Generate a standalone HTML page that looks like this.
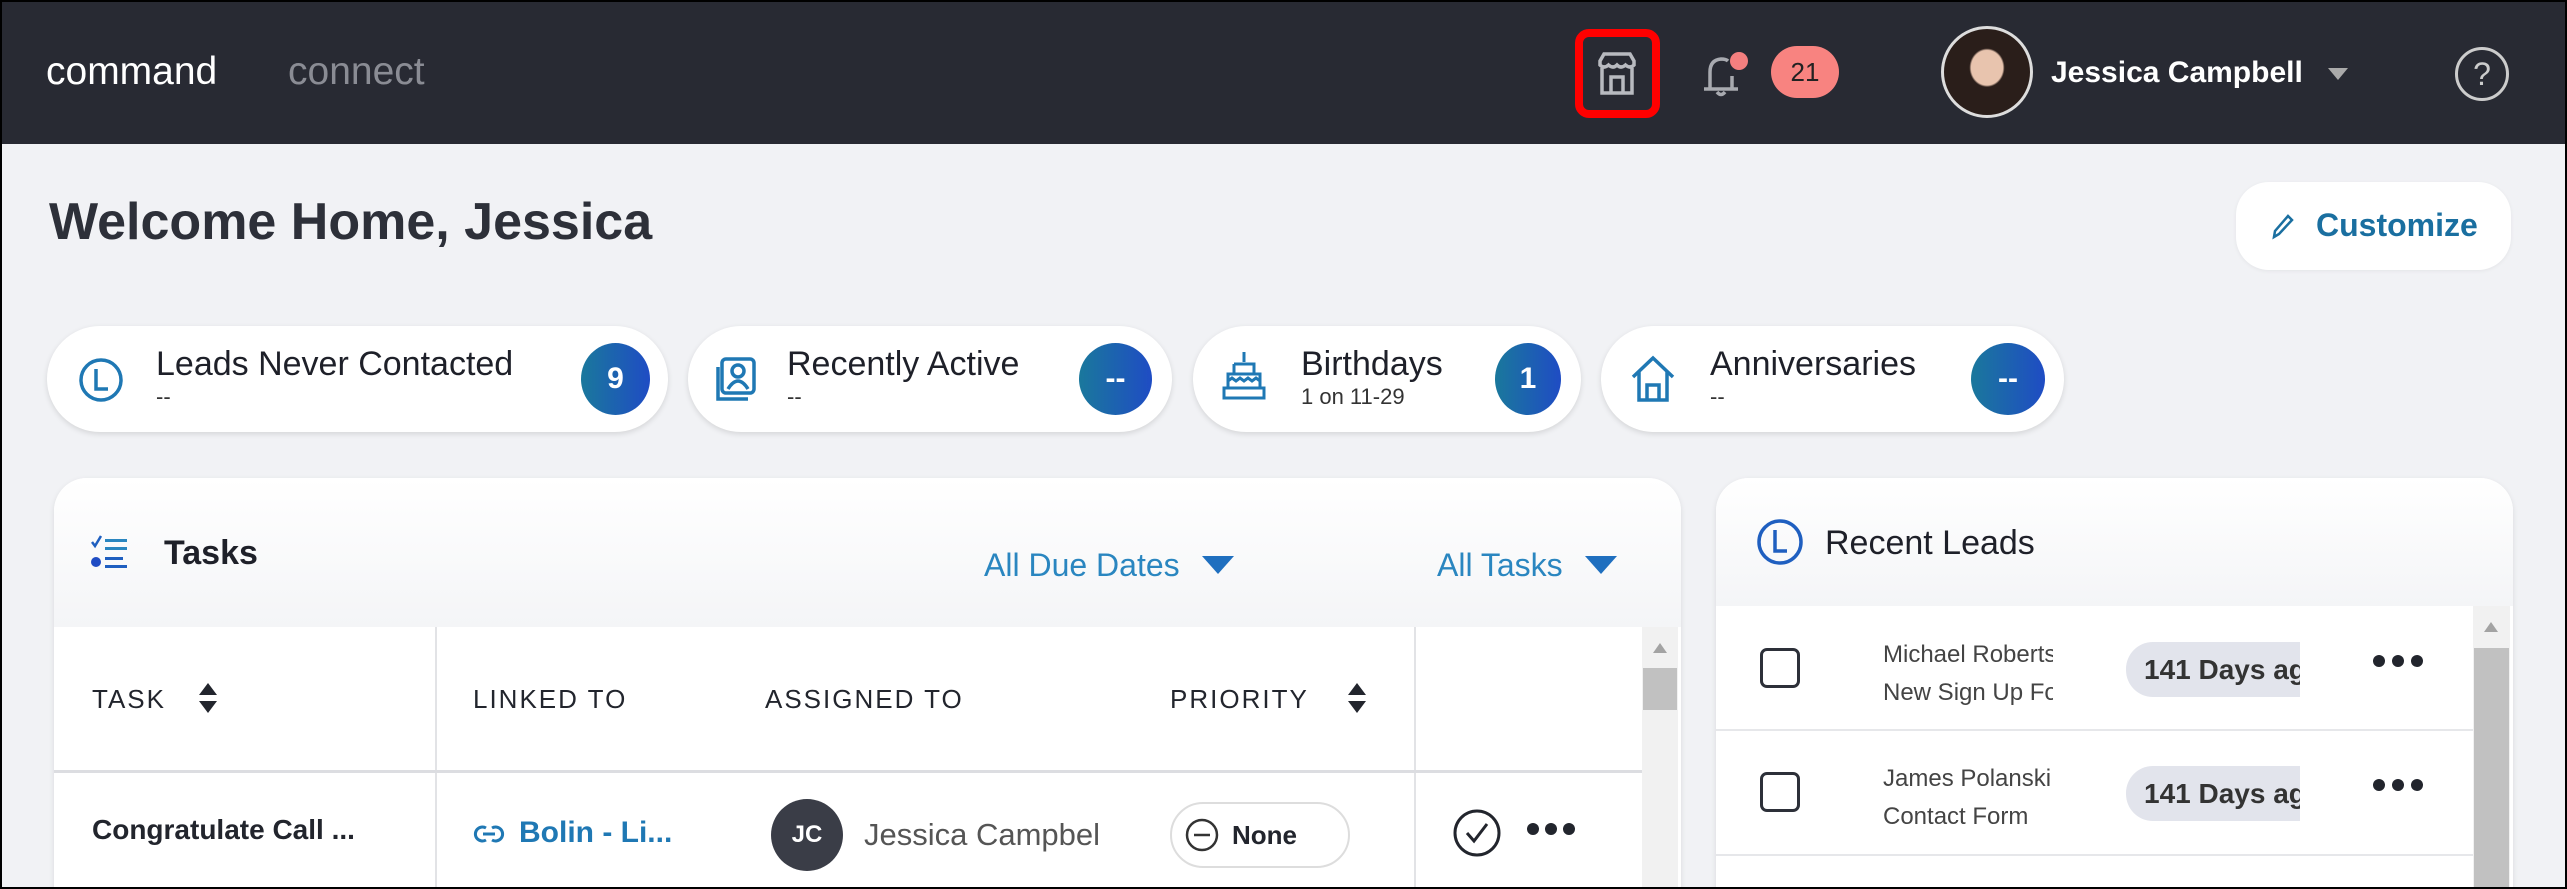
<!DOCTYPE html>
<html><head><meta charset="utf-8"><style>
*{box-sizing:border-box;margin:0;padding:0}
html,body{width:2567px;height:889px;overflow:hidden}
body{background:#f1f2f5;font-family:"Liberation Sans",sans-serif;position:relative}
#w{position:absolute;left:0;top:0;width:2567px;height:889px;overflow:hidden}
.frame{left:0;top:0;width:2567px;height:889px;border:2px solid #000;z-index:10;pointer-events:none}
.a{position:absolute}
.nav{left:0;top:0;width:2567px;height:144px;background:#282a33}
.pill{background:#fff;border-radius:53px;height:106px;top:326px;box-shadow:0 2px 6px rgba(0,0,0,.12)}
.pt{font-size:34px;color:#1e2029;font-weight:500;white-space:nowrap}
.ps{font-size:22px;color:#333;white-space:nowrap}
.badge{border-radius:50%;background:linear-gradient(90deg,#1a789c,#1f4cc4);color:#fff;font-weight:bold;font-size:30px;display:flex;align-items:center;justify-content:center;height:72px;top:343px}
.card{background:#fff;border-radius:33px 33px 0 0;box-shadow:0 2px 6px rgba(0,0,0,.1);overflow:hidden}
.th{font-size:26px;letter-spacing:2px;color:#22252d;font-weight:500;top:684px}
.blue{color:#2a86c0}
</style></head><body><div id="w">
<div class="a nav"></div>
<div class="a" style="left:46px;top:50px;font-size:39px;color:#fff">command</div>
<div class="a" style="left:288px;top:50px;font-size:39px;color:#8a8c94">connect</div>
<div class="a" style="left:1575px;top:29px;width:85px;height:89px;border:8px solid #f00;border-radius:14px"></div>
<svg class="a" style="left:1592px;top:49px" width="50" height="50" viewBox="0 0 50 50" fill="none" stroke="#b8bac0" stroke-width="3.5"><path d="M8 12 L12 5 H38 L42 12 V16 Q38 20 33.5 16 Q29 20 25 16 Q21 20 16.5 16 Q12 20 8 16 Z"/><path d="M10 19 V44 H40 V19"/><path d="M19 44 V28 H31 V44"/></svg>
<svg class="a" style="left:1696px;top:50px" width="50" height="50" viewBox="0 0 50 50" fill="none" stroke="#a8aab0" stroke-width="3.5"><path d="M14 38 V22 Q14 10 25 9 Q30 9 32 11"/><path d="M36 26 V38 M8 39 H42 M21 42 Q25 47 29 42"/></svg>
<div class="a" style="left:1730px;top:52px;width:18px;height:18px;border-radius:50%;background:#f47f7f"></div>
<div class="a" style="left:1771px;top:46px;width:68px;height:52px;border-radius:26px;background:#f88380;color:#222;font-size:26px;display:flex;align-items:center;justify-content:center">21</div>
<div class="a" style="left:1941px;top:26px;width:92px;height:92px;border-radius:50%;background:radial-gradient(ellipse at 50% 45%,#e8c4ae 0 26%,#2a1e1a 29%);border:3px solid #ddd"></div>
<div class="a" style="left:2051px;top:56px;font-size:30px;color:#fff;font-weight:bold">Jessica Campbell</div>
<div class="a" style="left:2328px;top:68px;width:0;height:0;border-left:10px solid transparent;border-right:10px solid transparent;border-top:12px solid #aaa"></div>
<div class="a" style="left:2455px;top:47px;width:54px;height:54px;border-radius:50%;border:3px solid #ccc;color:#ccc;font-size:32px;text-align:center;line-height:48px">?</div>

<div class="a" style="left:49px;top:192px;font-size:52px;font-weight:bold;color:#2d3039">Welcome Home, Jessica</div>
<div class="a" style="left:2236px;top:182px;width:275px;height:88px;border-radius:33px;background:#fff;box-shadow:0 1px 4px rgba(0,0,0,.06)"></div>
<svg class="a" style="left:2270px;top:212px" width="26" height="28" viewBox="0 0 26 28" fill="none" stroke="#1a6fa0" stroke-width="2.5"><path d="M4 25 L5 19 L18 4 L22 8 L9 22 Z"/></svg>
<div class="a" style="left:2316px;top:207px;font-size:32px;font-weight:bold;color:#1a6fa0">Customize</div>

<div class="a pill" style="left:47px;width:621px"></div>
<svg class="a" style="left:78px;top:357px" width="46" height="46" viewBox="0 0 46 46" fill="none" stroke="#1f78b4" stroke-width="3.5"><circle cx="23" cy="23" r="20"/><path d="M18 12 V32 H30"/></svg>
<div class="a pt" style="left:156px;top:345px">Leads Never Contacted</div>
<div class="a ps" style="left:156px;top:384px">--</div>
<div class="a badge" style="left:581px;width:69px">9</div>

<div class="a pill" style="left:688px;width:484px"></div>
<svg class="a" style="left:714px;top:355px" width="46" height="50" viewBox="0 0 46 50" fill="none" stroke="#1f78b4" stroke-width="3.5"><rect x="8" y="4" width="32" height="34" rx="4"/><path d="M4 12 V44 H34"/><circle cx="24" cy="16" r="6"/><path d="M14 34 Q24 18 34 34"/></svg>
<div class="a pt" style="left:787px;top:345px">Recently Active</div>
<div class="a ps" style="left:787px;top:384px">--</div>
<div class="a badge" style="left:1079px;width:73px">--</div>

<div class="a pill" style="left:1193px;width:388px"></div>
<svg class="a" style="left:1222px;top:350px" width="44" height="54" viewBox="0 0 44 54" fill="none" stroke="#1f78b4" stroke-width="3"><path d="M22 2 V12 M12 14 H32 V24 M12 14 V24 M6 24 H38 V38 H6 Z M6 31 L10 28 L14 31 L18 28 L22 31 L26 28 L30 31 L34 28 L38 31 M2 38 H42 V48 H2 Z"/></svg>
<div class="a pt" style="left:1301px;top:345px">Birthdays</div>
<div class="a ps" style="left:1301px;top:384px">1 on 11-29</div>
<div class="a badge" style="left:1495px;width:66px">1</div>

<div class="a pill" style="left:1601px;width:463px"></div>
<svg class="a" style="left:1630px;top:355px" width="46" height="48" viewBox="0 0 46 48" fill="none" stroke="#1f78b4" stroke-width="3.5"><path d="M3 22 L23 3 L43 22 M9 17 V45 H37 V17 M17 45 V30 H29 V45"/></svg>
<div class="a pt" style="left:1710px;top:345px">Anniversaries</div>
<div class="a ps" style="left:1710px;top:384px">--</div>
<div class="a badge" style="left:1971px;width:74px">--</div>

<div class="a card" style="left:54px;top:478px;width:1627px;height:420px">
 <div style="position:absolute;left:0;top:0;width:100%;height:149px;background:linear-gradient(#fff,#f4f5f7)"></div>
</div>
<svg class="a" style="left:90px;top:535px" width="40" height="36" viewBox="0 0 40 36"><path d="M2 7 L5 11 L11 1" stroke="#1f5fc0" stroke-width="2.5" fill="none"/><rect x="15" y="4" width="22" height="3" fill="#2a86c0"/><rect x="15" y="12" width="22" height="3" fill="#2a86c0"/><circle cx="6" cy="27" r="5" fill="#1f4cc4"/><rect x="15" y="22" width="18" height="3" fill="#1f5fc0"/><rect x="15" y="30" width="22" height="3" fill="#1f5fc0"/></svg>
<div class="a" style="left:164px;top:534px;font-size:34px;font-weight:bold;color:#1e2029">Tasks</div>
<div class="a blue" style="left:984px;top:547px;font-size:32px">All Due Dates</div>
<div class="a" style="left:1202px;top:556px;border-left:16px solid transparent;border-right:16px solid transparent;border-top:18px solid #1f6fbf"></div>
<div class="a blue" style="left:1437px;top:547px;font-size:32px">All Tasks</div>
<div class="a" style="left:1585px;top:556px;border-left:16px solid transparent;border-right:16px solid transparent;border-top:18px solid #1f6fbf"></div>
<div class="a" style="left:54px;top:627px;width:1588px;height:262px;background:#fff"></div>
<div class="a" style="left:435px;top:627px;width:2px;height:262px;background:#e2e3e6"></div>
<div class="a" style="left:1414px;top:627px;width:2px;height:262px;background:#e2e3e6"></div>
<div class="a" style="left:54px;top:770px;width:1588px;height:3px;background:#dcdde1"></div>
<div class="a" style="left:1642px;top:627px;width:36px;height:262px;background:#f1f1f1"></div>
<div class="a" style="left:1653px;top:643px;border-left:7px solid transparent;border-right:7px solid transparent;border-bottom:10px solid #a3a3a3"></div>
<div class="a" style="left:1643px;top:668px;width:34px;height:42px;background:#c1c1c1"></div>
<div class="a th" style="left:92px">TASK</div>
<svg class="a" style="left:198px;top:682px" width="20" height="32" viewBox="0 0 20 32"><path d="M10 1 L19 13 H1 Z M10 31 L19 19 H1 Z" fill="#22252d"/></svg>
<div class="a th" style="left:473px">LINKED TO</div>
<div class="a th" style="left:765px">ASSIGNED TO</div>
<div class="a th" style="left:1170px">PRIORITY</div>
<svg class="a" style="left:1347px;top:682px" width="20" height="32" viewBox="0 0 20 32"><path d="M10 1 L19 13 H1 Z M10 31 L19 19 H1 Z" fill="#22252d"/></svg>
<div class="a" style="left:92px;top:814px;font-size:28px;font-weight:bold;color:#22252d">Congratulate Call ...</div>
<svg class="a" style="left:472px;top:820px" width="34" height="28" viewBox="0 0 34 28" fill="none" stroke="#1f78b4" stroke-width="3"><path d="M14 8 A7 7 0 1 0 14 20 M20 8 A7 7 0 1 1 20 20 M11 14 H23"/></svg>
<div class="a" style="left:519px;top:816px;font-size:30px;font-weight:bold;color:#1f78b4">Bolin - Li...</div>
<div class="a" style="left:771px;top:799px;width:72px;height:72px;border-radius:50%;background:#3a3d47;color:#fff;font-weight:bold;font-size:24px;display:flex;align-items:center;justify-content:center">JC</div>
<div class="a" style="left:864px;top:817px;width:236px;overflow:hidden;white-space:nowrap;font-size:31px;color:#555">Jessica Campbell</div>
<div class="a" style="left:1170px;top:802px;width:180px;height:66px;border-radius:33px;border:2px solid #ddd;background:#fff"></div>
<svg class="a" style="left:1185px;top:818px" width="34" height="34" viewBox="0 0 34 34" fill="none" stroke="#333" stroke-width="2.5"><circle cx="17" cy="17" r="15"/><path d="M9 17 H25"/></svg>
<div class="a" style="left:1232px;top:820px;font-size:26px;font-weight:bold;color:#22252d">None</div>
<svg class="a" style="left:1452px;top:808px" width="50" height="50" viewBox="0 0 50 50" fill="none" stroke="#22252d" stroke-width="3"><circle cx="25" cy="25" r="22"/><path d="M15 25 L22 33 L35 16"/></svg>
<svg class="a" style="left:1526px;top:822px" width="50" height="14"><circle cx="7" cy="7" r="6" fill="#22252d"/><circle cx="25" cy="7" r="6" fill="#22252d"/><circle cx="43" cy="7" r="6" fill="#22252d"/></svg>

<div class="a card" style="left:1716px;top:478px;width:797px;height:420px">
 <div style="position:absolute;left:0;top:0;width:100%;height:128px;background:linear-gradient(#fff,#f4f5f7)"></div>
</div>
<svg class="a" style="left:1756px;top:518px" width="48" height="48" viewBox="0 0 48 48" fill="none" stroke="#1f5fc0" stroke-width="3.5"><circle cx="24" cy="24" r="21"/><path d="M19 12 V33 H31"/></svg>
<div class="a" style="left:1825px;top:524px;font-size:34px;font-weight:500;color:#1e2029">Recent Leads</div>
<div class="a" style="left:1716px;top:606px;width:757px;height:283px;background:#fff"></div>
<div class="a" style="left:1716px;top:729px;width:757px;height:2px;background:#e6e7ea"></div>
<div class="a" style="left:1716px;top:854px;width:757px;height:2px;background:#e6e7ea"></div>
<div class="a" style="left:2473px;top:606px;width:37px;height:283px;background:#f1f1f1"></div>
<div class="a" style="left:2484px;top:622px;border-left:7px solid transparent;border-right:7px solid transparent;border-bottom:10px solid #a3a3a3"></div>
<div class="a" style="left:2474px;top:648px;width:35px;height:241px;background:#c1c1c1"></div>

<div class="a" style="left:1760px;top:648px;width:40px;height:40px;border:3px solid #2d3039;border-radius:7px"></div>
<div class="a" style="left:1883px;top:636px;width:170px;overflow:hidden;white-space:nowrap;font-size:24px;color:#444;line-height:38px">Michael Roberts<br>New Sign Up Form</div>
<div class="a" style="left:2126px;top:642px;width:174px;height:55px;border-radius:27px 0 0 27px;background:#e2e4ec;overflow:hidden;white-space:nowrap;font-size:28px;font-weight:bold;color:#333;line-height:55px;padding-left:18px">141 Days ago</div>
<svg class="a" style="left:2372px;top:654px" width="52" height="14"><circle cx="7" cy="7" r="6" fill="#22252d"/><circle cx="26" cy="7" r="6" fill="#22252d"/><circle cx="45" cy="7" r="6" fill="#22252d"/></svg>

<div class="a" style="left:1760px;top:772px;width:40px;height:40px;border:3px solid #2d3039;border-radius:7px"></div>
<div class="a" style="left:1883px;top:760px;width:170px;overflow:hidden;white-space:nowrap;font-size:24px;color:#444;line-height:38px">James Polanski<br>Contact Form</div>
<div class="a" style="left:2126px;top:766px;width:174px;height:55px;border-radius:27px 0 0 27px;background:#e2e4ec;overflow:hidden;white-space:nowrap;font-size:28px;font-weight:bold;color:#333;line-height:55px;padding-left:18px">141 Days ago</div>
<svg class="a" style="left:2372px;top:778px" width="52" height="14"><circle cx="7" cy="7" r="6" fill="#22252d"/><circle cx="26" cy="7" r="6" fill="#22252d"/><circle cx="45" cy="7" r="6" fill="#22252d"/></svg>
<div class="a frame"></div>
</div></body></html>
